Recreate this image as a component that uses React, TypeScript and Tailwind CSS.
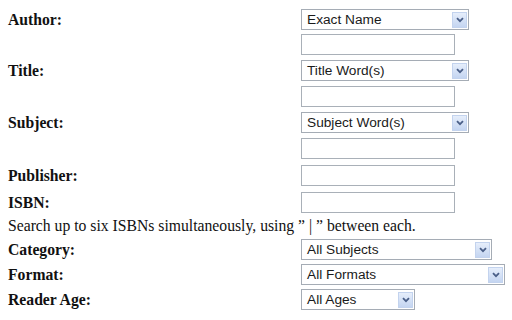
import React from "react";

type SelectProps = { value: string; width: string };

// Fake XP-style dropdown: text on the left, little blue arrow button on the right
const FakeSelect: React.FC<SelectProps> = ({ value, width }) => (
  <div
    className={`${width} flex h-[21px] items-center justify-between border border-[#a5acb5] bg-white pl-[5px] pr-px`}
  >
    <span className="font-['Liberation_Sans',Arial,sans-serif] text-[13.7px] leading-none text-[#1a1a1a]">
      {value}
    </span>
    <span className="flex h-[16px] w-[15px] items-center justify-center border border-[#c3d3ee] bg-gradient-to-b from-[#e6eefb] to-[#c4d5f1]">
      <svg width="8" height="6" viewBox="0 0 8 6">
        <path d="M1 1.2 L4 4.2 L7 1.2" fill="none" stroke="#4a5f88" strokeWidth="1.8" />
      </svg>
    </span>
  </div>
);

const TextBox: React.FC = () => (
  <input
    type="text"
    className="block h-[21px] w-[154px] border border-[#a9b0b8] bg-white outline-none"
  />
);

type RowProps = { label?: string; mt: string; children: React.ReactNode };

const Row: React.FC<RowProps> = ({ label, mt, children }) => (
  <div className={`flex h-[21px] items-center ${mt}`}>
    <div className="w-[293px] font-bold">{label}</div>
    {children}
  </div>
);

export default function App() {
  return (
    <div className="min-h-[320px] w-[512px] bg-white pl-2 pt-[9px] font-['Liberation_Serif','Times_New_Roman',serif] text-[15.7px] text-[#111]">
      <Row label="Author:" mt="mt-0">
        <FakeSelect value="Exact Name" width="w-[168px]" />
      </Row>
      <Row mt="mt-[4px]">
        <TextBox />
      </Row>
      <Row label="Title:" mt="mt-[5px]">
        <FakeSelect value="Title Word(s)" width="w-[168px]" />
      </Row>
      <Row mt="mt-[5px]">
        <TextBox />
      </Row>
      <Row label="Subject:" mt="mt-[5px]">
        <FakeSelect value="Subject Word(s)" width="w-[168px]" />
      </Row>
      <Row mt="mt-[5px]">
        <TextBox />
      </Row>
      <Row label="Publisher:" mt="mt-[6px]">
        <TextBox />
      </Row>
      <Row label="ISBN:" mt="mt-[6px]">
        <TextBox />
      </Row>
      <p className="my-[4px] h-[18px] leading-[18px]">
        Search up to six ISBNs simultaneously, using ” | ” between each.
      </p>
      <Row label="Category:" mt="mt-0">
        <FakeSelect value="All Subjects" width="w-[191px]" />
      </Row>
      <Row label="Format:" mt="mt-[4px]">
        <FakeSelect value="All Formats" width="w-[204px]" />
      </Row>
      <Row label="Reader Age:" mt="mt-[4px]">
        <FakeSelect value="All Ages" width="w-[114px]" />
      </Row>
    </div>
  );
}
